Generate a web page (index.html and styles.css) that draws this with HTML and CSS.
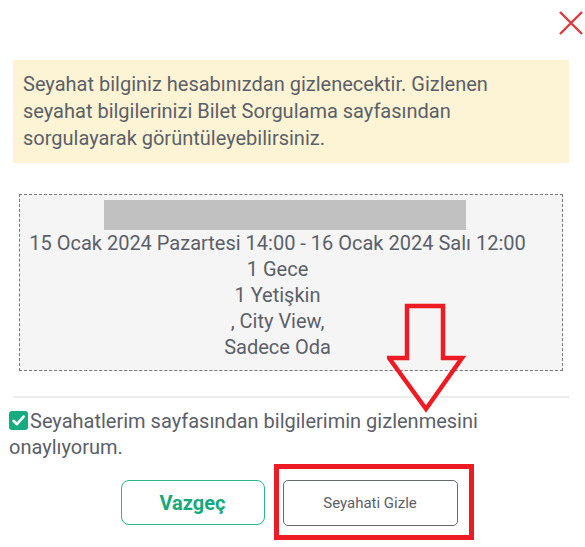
FILE: index.html
```html
<!DOCTYPE html>
<html>
<head>
    <meta charset="utf-8">
    <title>Seyahati Gizle</title>
    <link rel="stylesheet" href="styles.css">
</head>
<body>
	<div class="modal">
		<div class="top">
			<svg class="close" width="24" height="24" viewBox="0 0 24 24"><path d="M1 1L23 23M23 1L1 23" stroke="#dc3a3f" stroke-width="2.4" fill="none"/></svg>
		</div>

		<div class="warning">
			Seyahat bilginiz hesabınızdan gizlenecektir. Gizlenen seyahat bilgilerinizi Bilet Sorgulama sayfasından sorgulayarak görüntüleyebilirsiniz.
		</div>

		<div class="trip">
			<div class="trip-name"></div>
			<div>15 Ocak 2024 Pazartesi 14:00 - 16 Ocak 2024 Salı 12:00</div>
			<div>1 Gece</div>
			<div>1 Yetişkin</div>
			<div>, City View,</div>
			<div>Sadece Oda</div>
		</div>

		<div class="line"></div>

		<label class="confirm">
			<span class="check"><svg width="19" height="19" viewBox="0 0 19 19"><path d="M4.5 9.8L8 13.2L14.6 5.6" stroke="#fff" stroke-width="2.6" fill="none" stroke-linecap="round" stroke-linejoin="round"/></svg></span>Seyahatlerim sayfasından bilgilerimin gizlenmesini onaylıyorum.
		</label>

		<div class="buttons">
			<button class="btn-cancel">Vazgeç</button>
			<button class="btn-hide">Seyahati Gizle</button>
		</div>
	</div>

	<!-- isaretler -->
	<svg class="mark-arrow" width="80" height="110" viewBox="0 0 80 110"><path d="M20 3H56V55H75L39 106L2 55H20Z" stroke="#ed1c24" stroke-width="4.5" fill="none" stroke-linejoin="miter"/></svg>
	<div class="mark-box"></div>
</body>
</html>
```

FILE: styles.css
```css
body,html{padding: 0px;margin: 0px;background:#fff;}
body{font-family: Roboto, "Liberation Sans", sans-serif;color:#5b6068;}
.modal{padding:0 16px 0 13px;}
.top{height:60px;display:flex;justify-content:flex-end;align-items:flex-start;}
.close{margin-top:11px;margin-right:-14px;}

.warning{
	background:#fdf3d5;
	font-size:20px;
	line-height:27px;
	padding:11px 10px 11px 10px;
}

.trip{
	margin:31px 6px 0 6px;
	background:#f5f5f5;
	border:1px dashed #777;
	padding:5px 27px 10px 0;
	text-align:center;
	font-size:20px;
	line-height:26px;
}
.trip-name{
	width:362px;
	height:30px;
	background:#c1c1c1;
	margin-left:84px;
}

.line{height:2px;background:#ececec;margin-top:25px;}

.confirm{
	display:block;
	margin:10px 0 0 -4px;
	font-size:20px;
	line-height:26px;
}
.check{
	display:inline-block;
	width:19px;
	height:19px;
	background:#17ab7f;
	border-radius:3px;
	vertical-align:-2px;
	margin-right:2px;
}
.check svg{display:block;}

.buttons{
	display:flex;
	justify-content:center;
	gap:18px;
	margin-top:20px;
	padding-right:4px;
}
button{
	font-family: Roboto, "Liberation Sans", sans-serif;
	background:#fff;
	cursor:pointer;
}
.btn-cancel{
	width:144px;
	height:45px;
	border:1px solid #2bb58a;
	border-radius:8px;
	color:#16a97c;
	font-size:20px;
	font-weight:bold;
}
.btn-hide{
	width:175px;
	height:46px;
	border:1px solid #666a70;
	border-radius:5px;
	color:#5b6068;
	font-size:15px;
}

.mark-arrow{position:absolute;left:387px;top:303px;}
.mark-box{
	position:absolute;
	left:274px;
	top:464px;
	width:190px;
	height:66px;
	border:5px solid #ed1c24;
}
```
